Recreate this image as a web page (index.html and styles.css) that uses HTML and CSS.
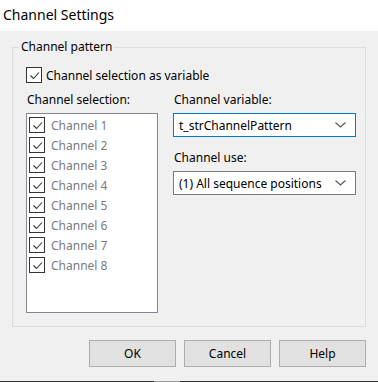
FILE: index.html
```html
<!DOCTYPE html>
<html lang="en">
  <head>
    <meta charset="UTF-8">
    <meta name="viewport" content="width=device-width, initial-scale=1.0">
    <link rel="stylesheet" href="styles.css">
    <title>Channel Settings</title>
  </head>
  <body>
    <div class="dialog">
      <div class="titlebar">Channel Settings</div>
      <div class="content">
        <fieldset class="group">
          <legend>Channel pattern</legend>
          <label class="check-row">
            <span class="box"><svg width="13" height="13" viewBox="0 0 13 13"><path d="M2.5 6.5 L5.5 9.5 L11 3.5" fill="none" stroke="#333" stroke-width="1.1"/></svg></span>
            Channel selection as variable
          </label>
          <div class="columns">
            <div class="col-left">
              <p class="label">Channel selection:</p>
              <ul class="listbox">
                <li><span class="box"><svg width="13" height="13" viewBox="0 0 13 13"><path d="M2.5 6.5 L5.5 9.5 L11 3.5" fill="none" stroke="#333" stroke-width="1.1"/></svg></span>Channel 1</li>
                <li><span class="box"><svg width="13" height="13" viewBox="0 0 13 13"><path d="M2.5 6.5 L5.5 9.5 L11 3.5" fill="none" stroke="#333" stroke-width="1.1"/></svg></span>Channel 2</li>
                <li><span class="box"><svg width="13" height="13" viewBox="0 0 13 13"><path d="M2.5 6.5 L5.5 9.5 L11 3.5" fill="none" stroke="#333" stroke-width="1.1"/></svg></span>Channel 3</li>
                <li><span class="box"><svg width="13" height="13" viewBox="0 0 13 13"><path d="M2.5 6.5 L5.5 9.5 L11 3.5" fill="none" stroke="#333" stroke-width="1.1"/></svg></span>Channel 4</li>
                <li><span class="box"><svg width="13" height="13" viewBox="0 0 13 13"><path d="M2.5 6.5 L5.5 9.5 L11 3.5" fill="none" stroke="#333" stroke-width="1.1"/></svg></span>Channel 5</li>
                <li><span class="box"><svg width="13" height="13" viewBox="0 0 13 13"><path d="M2.5 6.5 L5.5 9.5 L11 3.5" fill="none" stroke="#333" stroke-width="1.1"/></svg></span>Channel 6</li>
                <li><span class="box"><svg width="13" height="13" viewBox="0 0 13 13"><path d="M2.5 6.5 L5.5 9.5 L11 3.5" fill="none" stroke="#333" stroke-width="1.1"/></svg></span>Channel 7</li>
                <li><span class="box"><svg width="13" height="13" viewBox="0 0 13 13"><path d="M2.5 6.5 L5.5 9.5 L11 3.5" fill="none" stroke="#333" stroke-width="1.1"/></svg></span>Channel 8</li>
              </ul>
            </div>
            <div class="col-right">
              <p class="label">Channel variable:</p>
              <div class="combo focused">
                <span>t_strChannelPattern</span>
                <svg width="11" height="6" viewBox="0 0 11 6"><path d="M0.5 0.5 L5.5 5 L10.5 0.5" fill="none" stroke="#555" stroke-width="1.1"/></svg>
              </div>
              <p class="label use">Channel use:</p>
              <div class="combo">
                <span>(1) All sequence positions</span>
                <svg width="11" height="6" viewBox="0 0 11 6"><path d="M0.5 0.5 L5.5 5 L10.5 0.5" fill="none" stroke="#555" stroke-width="1.1"/></svg>
              </div>
            </div>
          </div>
        </fieldset>
        <div class="buttons">
          <button>OK</button>
          <button>Cancel</button>
          <button>Help</button>
        </div>
      </div>
      <div class="taskbar"><span></span></div>
    </div>
  </body>
</html>
```

FILE: styles.css
```css
* {
margin: 0;
padding: 0;
box-sizing: border-box;
}
html,
body {
width: 100%;
height: 100%;
}
body {
font-family: "Noto Sans", "Open Sans", sans-serif;
font-size: 12px;
color: #000;
background-color: #f0f0f0;
}
.dialog {
width: 378px;
height: 382px;
display: flex;
flex-direction: column;
}
.titlebar {
height: 31px;
background-color: #fff;
font-size: 14px;
line-height: 30px;
padding-left: 3px;
}
.content {
flex: 1;
padding: 8px 12px 0 12px;
}
.group {
width: 354px;
height: 288px;
border: 1px solid #dcdcdc;
padding: 0 0 0 13px;
}
.group legend {
margin-left: -7px;
padding: 0 2px;
line-height: 16px;
}
.check-row {
display: flex;
align-items: center;
height: 16px;
margin-top: 12px;
gap: 4px;
}
.box {
width: 16px;
height: 16px;
border: 1px solid #333;
background-color: #fff;
display: flex;
align-items: center;
justify-content: center;
flex-shrink: 0;
}
.columns {
display: flex;
gap: 15px;
margin-top: 9px;
}
.label {
line-height: 16px;
padding-left: 1px;
margin-bottom: 5px;
}
.label.use {
margin-top: 13px;
}
.listbox {
list-style: none;
width: 132px;
height: 200px;
border: 1px solid #828790;
background-color: #fff;
padding: 1px 0 0 2px;
}
.listbox li {
height: 20px;
display: flex;
align-items: center;
gap: 6px;
color: #7a7a80;
}
.col-right {
width: 183px;
}
.combo {
height: 24px;
border: 1px solid #7a7a7a;
background-color: #fff;
display: flex;
align-items: center;
justify-content: space-between;
padding: 0 9px 0 5px;
}
.combo.focused {
border-color: #0078d7;
}
.buttons {
display: flex;
justify-content: flex-end;
gap: 8px;
margin-top: 13px;
}
.buttons button {
width: 87px;
height: 27px;
border: 1px solid #adadad;
background-color: #e1e1e1;
font-family: inherit;
font-size: 12px;
color: #000;
}
.taskbar {
height: 1px;
background-color: #333;
padding-left: 154px;
}
.taskbar span {
display: block;
width: 26px;
height: 1px;
background-color: #999;
}
```
